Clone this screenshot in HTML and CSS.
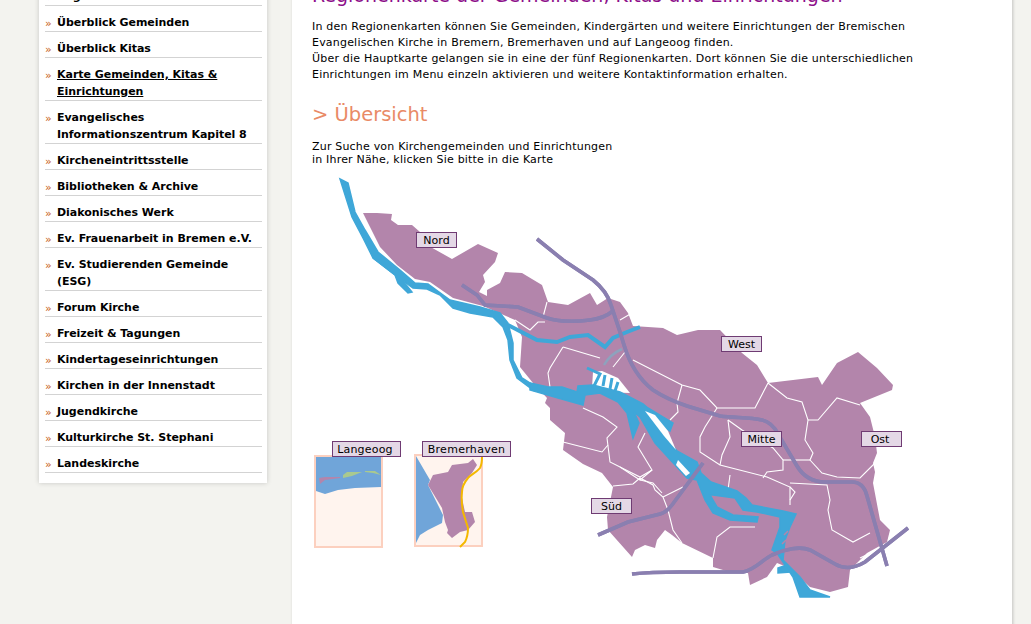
FILE: index.html
```html
<!DOCTYPE html>
<html lang="de">
<head>
<meta charset="utf-8">
<title>Regionenkarte</title>
<link rel="stylesheet" href="styles.css">
</head>
<body>
<div class="page">
  <nav class="side">
    <ul class="menu">
      <li><a href="#">Regionenkarten</a></li>
      <li><a href="#">Überblick Gemeinden</a></li>
      <li><a href="#">Überblick Kitas</a></li>
      <li><a href="#" class="current">Karte Gemeinden, Kitas &amp; Einrichtungen</a></li>
      <li><a href="#">Evangelisches Informationszentrum Kapitel 8</a></li>
      <li><a href="#">Kircheneintrittsstelle</a></li>
      <li><a href="#">Bibliotheken &amp; Archive</a></li>
      <li><a href="#">Diakonisches Werk</a></li>
      <li><a href="#">Ev. Frauenarbeit in Bremen e.V.</a></li>
      <li><a href="#">Ev. Studierenden Gemeinde (ESG)</a></li>
      <li><a href="#">Forum Kirche</a></li>
      <li><a href="#">Freizeit &amp; Tagungen</a></li>
      <li><a href="#">Kindertageseinrichtungen</a></li>
      <li><a href="#">Kirchen in der Innenstadt</a></li>
      <li><a href="#">Jugendkirche</a></li>
      <li><a href="#">Kulturkirche St. Stephani</a></li>
      <li><a href="#">Landeskirche</a></li>
    </ul>
  </nav>
  <main class="content">
    <h1 class="title">Regionenkarte der Gemeinden, Kitas und Einrichtungen</h1>
    <p class="intro">In den Regionenkarten können Sie Gemeinden, Kindergärten und weitere Einrichtungen der Bremischen Evangelischen Kirche in Bremern, Bremerhaven und auf Langeoog finden.<br>Über die Hauptkarte gelangen sie in eine der fünf Regionenkarten. Dort können Sie die unterschiedlichen Einrichtungen im Menu einzeln aktivieren und weitere Kontaktinformation erhalten.</p>
    <h2 class="sub">&gt; Übersicht</h2>
    <p class="hint">Zur Suche von Kirchengemeinden und Einrichtungen<br>in Ihrer Nähe, klicken Sie bitte in die Karte</p>
    <div class="map">
      <svg class="map-art" width="610" height="430" viewBox="312 170 610 430" aria-hidden="true">
        <!-- Langeoog inset -->
        <rect class="frame" x="315" y="456" width="67" height="91"/>
        <path class="sea" d="M316 457H381V487L355 488 338 490 325 494 316 491Z"/>
        <path class="ins-land" d="M319 478L325 477 340 477 340 478 325 480 320 484Z"/>
        <path class="ins-green" d="M343 475L347 472 362 472 352 476 343 478ZM365 471L375 471 381 475 373 473 365 472Z"/>
        <!-- Bremerhaven inset -->
        <rect class="frame" x="415" y="455" width="67" height="91"/>
        <path class="sea" d="M416 456L430 480 428 485 443 515 442 523 428 530 420 535 416 543Z"/>
        <path class="ins-land" d="M428 485L433 475 448 472 452 465 468 463 473 459 477 465 472 473 463 482 462 498 465 512 472 512 475 522 468 530 460 532 452 538 447 533 448 530 445 522 442 508Z"/>
        <path class="ins-road" d="M482 457C482 462 481 466 480 468 476 473 470 475 468 478 463 484 462 488 462 492 461 500 462 506 463 512L468 528C468 534 466 540 465 542L460 547"/>

        <!-- Land -->
        <path class="land" d="M363 213L377 213 392 214 391 220 398 225 412 225 420 232 427 245 452 259 478 244 498 253 495 262 483 275 485 282 479 292 487 296 487 290 500 283 505 272 522 273 542 285 548 302 568 305 590 293 597 305 608 298 620 302 628 313 633 326 663 328 677 335 698 330 720 330 742 353 757 365 768 383 818 377 822 385 837 363 858 352 877 368 893 385 892 390 860 403 870 417 875 437 877 453 873 463 875 472 873 483 880 520 890 530 887 542 867 553 850 570 848 587 830 592 810 587 800 578 787 567 777 563 767 577 750 585 748 573 733 573 713 567 713 558 682 543 672 535 665 530 657 540 655 548 645 545 635 550 632 557 608 530 607 517 613 487 602 473 583 464 563 450 565 433 550 420 550 408 545 403 547 398 533 383 520 367 522 337 515 320 483 306 453 298 430 282 415 279 397 265 380 247Z"/>

        <!-- District borders -->
        <g class="borders">
          <path d="M633 360L682 385 700 390 717 408 755 408 768 383"/>
          <path d="M682 385L677 403 678 412 670 420"/>
          <path d="M768 383L787 398 802 402 808 420 805 440 813 453 810 460 822 473 837 477 860 478 875 463"/>
          <path d="M808 420H818L837 398 860 405"/>
          <path d="M717 408L705 427 700 437 700 452 720 465 767 477 790 487 790 505"/>
          <path d="M728 420L730 437 722 455 720 465"/>
          <path d="M728 420L742 430 773 448 783 460 783 470 767 472 763 478"/>
          <path d="M783 460H810"/>
          <path d="M790 483L827 485 830 500 828 510 832 530 853 542 870 533"/>
          <path d="M730 475L728 490"/>
          <path d="M790 487L795 492 790 500"/>
          <path d="M860 558L883 547"/>
          <path d="M755 527H730L717 537 713 558"/>
          <path d="M583 408L603 417 617 427 607 438 610 462 640 477 652 470 638 447 645 433"/>
          <path d="M563 442L602 452 608 445"/>
          <path d="M613 486L633 484 640 478 653 485 655 490 663 497 668 510 673 530 682 543"/>
          <path d="M663 497L683 487"/>
          <path d="M515 320L530 330 538 322 545 322"/>
          <path d="M563 347L600 358"/>
          <path d="M563 347L550 368 548 373 550 387"/>
          <path d="M547 302L543 317"/>
          <path d="M620 320L632 313"/>
          <path d="M613 367L625 352"/>
          <path d="M620 467L640 480 652 470"/>
          <path d="M640 480L653 483 662 493"/>
        </g>

        <!-- Water -->
        <path class="arc" d="M604 365C608 358 613 353 622 349"/>
        <path class="gap" d="M593 372L602 371 618 378 630 393 600 392 592 388Z"/>
        <g class="water">
          <path class="fill" d="M340 179L348 183 355 212 365 230 378 252 400 270 415 283 428 284 450 300 480 307 500 313 508 323 513 343 513 360 522 378 533 385 533 390 517 378 510 360 508 340 503 327 493 317 470 313 453 308 440 295 427 289 413 288 395 275 373 258 363 238 352 217Z"/>
          <path class="fill" d="M373 258L390 265 412 292 408 293 398 283 395 275Z"/>
          <path class="lesum" d="M508 325L537 340 557 342 570 337 588 335 605 347 613 338 627 332 640 327"/>
          <path class="fill" d="M530 383L548 387 562 387 577 392 578 386 593 385 620 392 643 404 648 408 673 423 670 431 652 419 662 433 677 451 697 462 701 473 711 482 737 491 746 498 752 505 783 511 796 514 790 527 785 540 783 560 800 577 810 590 830 597 800 597 793 577 777 553 772 550 780 527 780 517 757 512 743 510 735 498 713 495 710 495 717 507 733 515 758 517 757 522 730 520 713 513 705 500 697 480 687 478 655 443 640 417 634 412 639 423 633 438 627 413 618 402 600 393 585 395 583 405 558 398 530 390Z"/>
          <path class="fill" d="M778 568L787 565 790 572 778 573Z"/>
          <path class="gap" d="M645 411L655 415 668 431 676 450 664 436Z"/>
          <path class="gap" d="M678 460L690 473 686 476 676 465Z"/>
          <path class="fine" d="M587 368L600 374 593 388M605 375L603 386M612 378L610 389M618 382L615 391"/>
          <path class="notch" d="M788 531L784 535M786 540L782 544"/>
        </g>

        <!-- Roads: a casing and a pale centre line -->
        <g class="roads">
          <path id="r1" d="M537 239L563 260 593 280C603 288 608 295 611 305L620 332 624 345C630 365 640 380 653 390 665 398 675 402 687 406L720 416C735 418 750 417 762 420 770 422 775 428 778 434L797 466C803 476 812 482 825 482H852C860 482 865 488 867 496L887 566"/>
          <path id="r2" d="M462 285L477 295 485 305 518 307 547 318C560 322 575 322 590 320 600 319 608 315 613 311"/>
          <path id="r3" d="M632 574C650 572 665 572 680 572H743C755 570 762 560 772 555 785 549 800 546 810 550L835 564C845 570 855 568 865 562L908 528"/>
          <path id="r4" d="M598 535L628 522 660 514C665 513 668 510 672 505L703 463"/>
        </g>
        <g class="road-lines">
          <use href="#r1"/><use href="#r2"/><use href="#r3"/><use href="#r4"/>
        </g>
      </svg>
      <span class="tag tag-nord">Nord</span>
      <span class="tag tag-west">West</span>
      <span class="tag tag-mitte">Mitte</span>
      <span class="tag tag-ost">Ost</span>
      <span class="tag tag-sued">Süd</span>
      <span class="tag tag-lang">Langeoog</span>
      <span class="tag tag-brem">Bremerhaven</span>
    </div>
  </main>
</div>
</body>
</html>
```
FILE: styles.css
```css
html, body { margin: 0; padding: 0; height: 624px; overflow: hidden; }
body { background: #f3f3ef; font-family: "DejaVu Sans", Verdana, sans-serif; color: #000; }

.page { display: flex; align-items: flex-start; margin-top: -20px; padding-left: 39px; }

.side { width: 228px; margin-right: 25px; background: #fff; box-shadow: 0 0 5px rgba(0,0,0,.18); padding: 0 5px 10px 6px; box-sizing: border-box; }
.menu { list-style: none; margin: 0; padding: 0; }
.menu li { position: relative; padding: 8px 0 0 12px; border-bottom: 1px solid #d3d3d3; font-size: 11px; line-height: 17px; font-weight: bold; letter-spacing: -.03px; }
.menu li::before { content: "»"; position: absolute; left: 0; top: 9px; color: #c95f22; font-weight: normal; font-size: 11px; }
.menu a { color: #000; text-decoration: none; }
.menu a.current { text-decoration: underline; }

.content { width: 720px; height: 660px; box-sizing: border-box; padding: 0 20px; background: #fff; box-shadow: 1px 0 3px rgba(0,0,0,.2); }
.title { margin: 0; padding-top: 3px; height: 26px; font-size: 19px; line-height: 24px; font-weight: normal; color: #8d0f8a; white-space: nowrap; }
.intro { margin: 10px 0 0; width: 630px; font-size: 11px; line-height: 16px; letter-spacing: .2px; }
.sub { margin: 18px 0 0; font-size: 19.5px; line-height: 28px; font-weight: normal; color: #e98a66; }
.hint { margin: 11px 0 0; font-size: 11px; line-height: 13px; letter-spacing: .19px; }

.map { position: relative; width: 610px; height: 430px; margin-top: 4px; }
.map-art { display: block; }
.frame { fill: #fff4ee; stroke: #fcd0bf; stroke-width: 2; }
.sea { fill: #70a5d9; }
.ins-land { fill: #b385ab; }
.ins-green { fill: #a9c98f; }
.ins-road { fill: none; stroke: #f4b800; stroke-width: 2; }
.land { fill: #b385ab; }
.borders path { fill: none; stroke: #fff; stroke-width: 1.1; }
.arc { fill: none; stroke: #8ea2bd; stroke-width: 2.5; }
.lesum { fill: none; stroke: #3fa7d8; stroke-width: 4; }
.fill { fill: #3fa7d8; stroke: #3fa7d8; stroke-width: 1.5; }
.fine { fill: none; stroke: #3fa7d8; stroke-width: 3; }
.notch { fill: none; stroke: #b385ab; stroke-width: 1.5; }
.gap { fill: #fff; }
.roads path { fill: none; stroke: #8a7fb0; stroke-width: 3.6; }
.road-lines { fill: none; stroke: #eeeaf4; stroke-width: 1.1; }

.tag { position: absolute; box-sizing: border-box; height: 16px; border: 1px solid #6f3b73; background: #e4d8e6; font-size: 11px; line-height: 15px; text-align: center; white-space: nowrap; }
.tag-nord { left: 104px; top: 62px; width: 41px; }
.tag-west { left: 409px; top: 166px; width: 41px; }
.tag-mitte { left: 429px; top: 261px; width: 41px; }
.tag-ost { left: 549px; top: 261px; width: 41px; padding-right: 3px; }
.tag-sued { left: 279px; top: 328px; width: 41px; }
.tag-lang { left: 20px; top: 271px; width: 69px; letter-spacing: .2px; padding-right: 3px; }
.tag-brem { left: 110px; top: 271px; width: 89px; letter-spacing: .3px; }
```
